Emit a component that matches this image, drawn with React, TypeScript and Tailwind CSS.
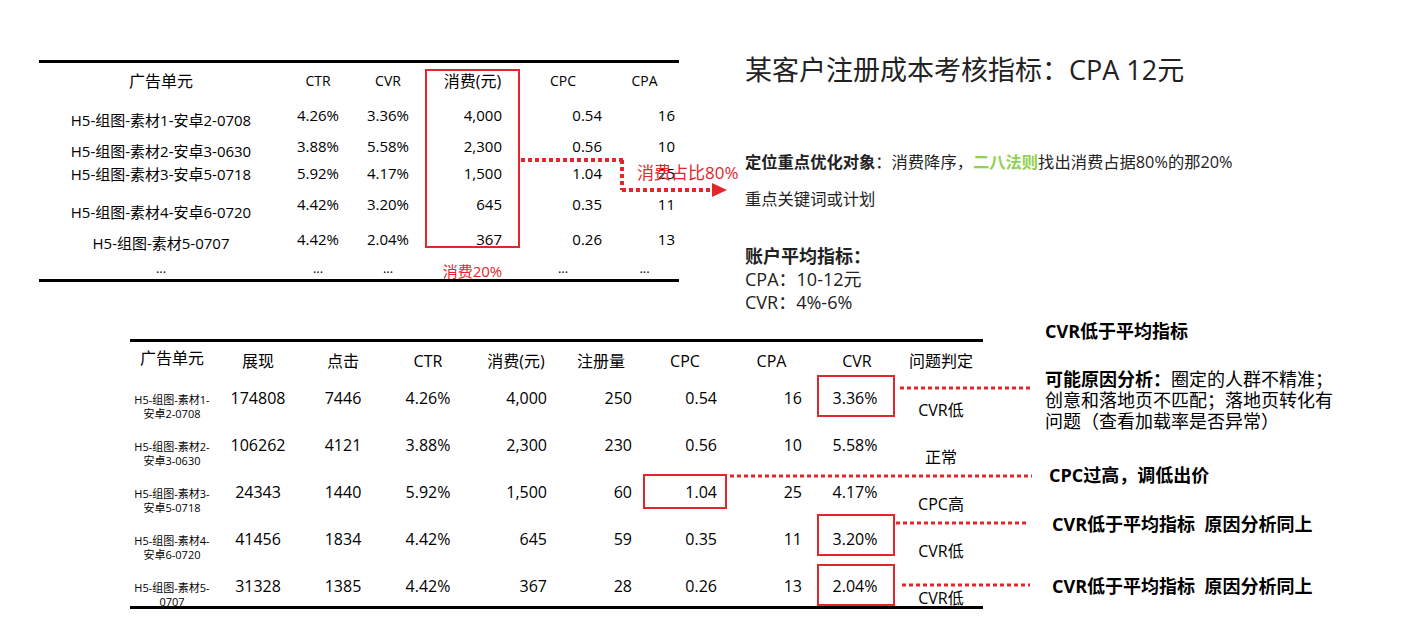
import React from "react"

type TopRow = {
  name: string
  ctr: string
  cvr: string
  cost: string
  cpc: string
  cpa: string
  h: string
  namePad: string
}

const topRows: TopRow[] = [
  { name: "H5-组图-素材1-安卓2-0708", ctr: "4.26%", cvr: "3.36%", cost: "4,000", cpc: "0.54", cpa: "16", h: "h-[32px]", namePad: "pt-[10px]" },
  { name: "H5-组图-素材2-安卓3-0630", ctr: "3.88%", cvr: "5.58%", cost: "2,300", cpc: "0.56", cpa: "10", h: "h-[30px]", namePad: "pt-[10px]" },
  { name: "H5-组图-素材3-安卓5-0718", ctr: "5.92%", cvr: "4.17%", cost: "1,500", cpc: "1.04", cpa: "25", h: "h-[24px]", namePad: "pt-[2px]" },
  { name: "H5-组图-素材4-安卓6-0720", ctr: "4.42%", cvr: "3.20%", cost: "645", cpc: "0.35", cpa: "11", h: "h-[38px]", namePad: "pt-[16px]" },
  { name: "H5-组图-素材5-0707", ctr: "4.42%", cvr: "2.04%", cost: "367", cpc: "0.26", cpa: "13", h: "h-[32px]", namePad: "pt-[8px]" },
]

const bottomRows = [
  { n1: "H5-组图-素材1-", n2: "安卓2-0708", show: "174808", click: "7446", ctr: "4.26%", cost: "4,000", reg: "250", cpc: "0.54", cpa: "16", cvr: "3.36%", judge: "CVR低", h: "h-[47px]" },
  { n1: "H5-组图-素材2-", n2: "安卓3-0630", show: "106262", click: "4121", ctr: "3.88%", cost: "2,300", reg: "230", cpc: "0.56", cpa: "10", cvr: "5.58%", judge: "正常", h: "h-[47px]" },
  { n1: "H5-组图-素材3-", n2: "安卓5-0718", show: "24343", click: "1440", ctr: "5.92%", cost: "1,500", reg: "60", cpc: "1.04", cpa: "25", cvr: "4.17%", judge: "CPC高", h: "h-[47px]" },
  { n1: "H5-组图-素材4-", n2: "安卓6-0720", show: "41456", click: "1834", ctr: "4.42%", cost: "645", reg: "59", cpc: "0.35", cpa: "11", cvr: "3.20%", judge: "CVR低", h: "h-[47px]" },
  { n1: "H5-组图-素材5-", n2: "0707", show: "31328", click: "1385", ctr: "4.42%", cost: "367", reg: "28", cpc: "0.26", cpa: "13", cvr: "2.04%", judge: "CVR低", h: "h-[44px]" },
]

const topCols = "grid grid-cols-[244px_70px_70px_99px_82px_75px]"
const bottomCols = "grid grid-cols-[84px_88px_82px_88px_88px_82px_86px_87px_84px_84px]"

function TopTable() {
  return (
    <div className="relative mt-[60px] ml-[39px] w-[640px] border-y-[3px] border-black text-[15px] leading-[20px] text-black">
      <div className={`${topCols} h-[36px] items-center text-center`}>
        <div className="text-[16px]">广告单元</div>
        <div className="text-[14px]">CTR</div>
        <div className="text-[14px]">CVR</div>
        <div className="text-[16px]">消费(元)</div>
        <div className="text-[14px]">CPC</div>
        <div className="pl-[6px] text-[14px]">CPA</div>
      </div>
      {topRows.map((r) => (
        <div key={r.name} className={`${topCols} ${r.h} items-center`}>
          <div className={`${r.namePad} text-center`}>{r.name}</div>
          <div className="text-center">{r.ctr}</div>
          <div className="text-center">{r.cvr}</div>
          <div className="pr-[20px] text-right">{r.cost}</div>
          <div className="pr-[2px] text-right">{r.cpc}</div>
          <div className="pr-[4px] text-right">{r.cpa}</div>
        </div>
      ))}
      <div className={`${topCols} h-[24px] items-center text-center text-[13px]`}>
        <div>...</div>
        <div>...</div>
        <div>...</div>
        <div className="pt-[6px] text-[15px] text-[#e3262b]">消费20%</div>
        <div>...</div>
        <div className="pl-[6px]">...</div>
      </div>

      {/* 消费列红框 */}
      <div className="absolute left-[386px] top-[6px] h-[179px] w-[95px] border-2 border-[#e3262b]" />
    </div>
  )
}

function BottomTable() {
  return (
    <div className="relative mt-[18px] ml-[130px] w-[853px] border-y-[3px] border-black text-[16px] leading-[20px] text-black">
      <div className={`${bottomCols} h-[32px] items-start pt-[9px] text-center`}>
        <div className="-mt-[3px]">广告单元</div>
        <div>展现</div>
        <div>点击</div>
        <div>CTR</div>
        <div>消费(元)</div>
        <div>注册量</div>
        <div>CPC</div>
        <div>CPA</div>
        <div>CVR</div>
        <div>问题判定</div>
      </div>
      {bottomRows.map((r) => (
        <div key={r.n1} className={`${bottomCols} ${r.h} items-start`}>
          <div className="pt-[19px] text-center text-[11px] leading-[14px]">
            <div>{r.n1}</div>
            <div>{r.n2}</div>
          </div>
          <div className="pt-[14px] text-center">{r.show}</div>
          <div className="pt-[14px] text-center">{r.click}</div>
          <div className="pt-[14px] text-center">{r.ctr}</div>
          <div className="pr-[13px] pt-[14px] text-right">{r.cost}</div>
          <div className="pr-[10px] pt-[14px] text-right">{r.reg}</div>
          <div className="pr-[11px] pt-[14px] text-right">{r.cpc}</div>
          <div className="pr-[13px] pt-[14px] text-right">{r.cpa}</div>
          <div className="pr-[4px] pt-[14px] text-center">{r.cvr}</div>
          <div className="pt-[26px] text-center">{r.judge}</div>
        </div>
      ))}

      {/* 红框 */}
      <div className="absolute left-[687px] top-[33px] h-[42px] w-[78px] border-2 border-[#e3262b]" />
      <div className="absolute left-[513px] top-[132px] h-[35px] w-[84px] border-2 border-[#e3262b]" />
      <div className="absolute left-[687px] top-[172px] h-[42px] w-[78px] border-2 border-[#e3262b]" />
      <div className="absolute left-[687px] top-[222px] h-[42px] w-[78px] border-2 border-[#e3262b]" />
    </div>
  )
}

function Overlay() {
  const red = "#e3262b"
  return (
    <svg className="pointer-events-none absolute left-0 top-0" width={1424} height={636}>
      <g stroke={red} strokeWidth={4} strokeDasharray="4 3" fill="none">
        <line x1={521} y1={160} x2={624} y2={160} />
        <line x1={622} y1={160} x2={622} y2={190} />
        <line x1={622} y1={190} x2={712} y2={190} />
      </g>
      <polygon points="712,183 727,190 712,197" fill={red} />
      <g stroke={red} strokeWidth={3} strokeDasharray="4 3" fill="none">
        <line x1={900} y1={388} x2={1032} y2={388} />
        <line x1={730} y1={476} x2={1032} y2={476} />
        <line x1={896} y1={523} x2={1028} y2={523} />
        <line x1={902} y1={585} x2={1030} y2={585} />
      </g>
    </svg>
  )
}

export default function App() {
  return (
    <div className="relative h-[636px] w-[1424px] overflow-hidden bg-white text-black [font-family:'Open_Sans','Noto_Sans_CJK_SC',sans-serif]">
      <div className="relative flex h-[321px] items-start">
        <TopTable />

        <div className="ml-[66px] flex flex-col text-[#222]">
          <div className="mt-[54px] text-[27px] leading-[32px]">某客户注册成本考核指标：CPA 12元</div>
          <div className="mt-[58px] text-[16.3px] leading-[37px]">
            <div>
              <span className="font-bold">定位重点优化对象</span>：消费降序，
              <span className="font-bold text-[#92d050]">二八法则</span>找出消费占据80%的那20%
            </div>
            <div>重点关键词或计划</div>
          </div>
          <div className="mt-[27px] text-[18px] leading-[23px]">
            <div className="font-bold">账户平均指标：</div>
            <div>CPA：10-12元</div>
            <div>CVR：4%-6%</div>
          </div>
        </div>

        <div className="absolute left-[637px] top-[163px] text-[17px] leading-[20px] text-[#e3262b]">消费占比80%</div>
      </div>

      <div className="flex items-start">
        <BottomTable />

        <div className="ml-[62px] flex flex-col text-[18px] leading-[21px] text-black">
          <div className="font-bold">CVR低于平均指标</div>
          <div className="mt-[27px]">
            <div>
              <span className="font-bold">可能原因分析：</span>圈定的人群不精准；
            </div>
            <div>创意和落地页不匹配；落地页转化有</div>
            <div>问题（查看加载率是否异常）</div>
          </div>
          <div className="mt-[33px] pl-[4px] font-bold">CPC过高，调低出价</div>
          <div className="mt-[28px] pl-[7px] font-bold">CVR低于平均指标&nbsp;&nbsp;原因分析同上</div>
          <div className="mt-[41px] pl-[7px] font-bold">CVR低于平均指标&nbsp;&nbsp;原因分析同上</div>
        </div>
      </div>

      <Overlay />
    </div>
  )
}
